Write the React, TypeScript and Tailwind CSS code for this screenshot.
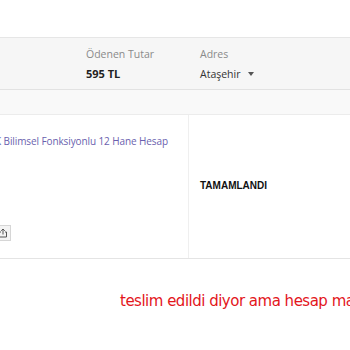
/* Order detail fragment: summary band, product row and a note */
export default function App() {
  return (
    <div className="w-[350px] h-[350px] overflow-hidden bg-white font-['Open_Sans',sans-serif]">
      {/* Top blank area */}
      <div className="h-[37px]" />

      {/* Summary band with amount and address */}
      <div className="border-t border-[#e6e6e6] bg-[#f6f6f6] h-[52px] flex pl-[86px] pt-[9px]">
        <div className="w-[114px]">
          <div className="text-[10.5px] leading-[14px] text-[#8a8a8a]">Ödenen Tutar</div>
          <div className="mt-[6px] text-[11px] leading-[14px] font-bold text-[#222]">595 TL</div>
        </div>
        <div>
          <div className="text-[10.5px] leading-[14px] text-[#8a8a8a]">Adres</div>
          <div className="mt-[6px] flex items-center text-[10.5px] leading-[14px] text-[#333]">
            Ataşehir
            <svg width="6" height="4" viewBox="0 0 6 4" className="ml-[7px]">
              <path d="M0 0h6L3 4z" fill="#555" />
            </svg>
          </div>
        </div>
      </div>

      {/* Empty secondary strip */}
      <div className="border-t border-[#e2e2e2] border-b border-b-[#ececec] bg-[#f9f9f9] h-[26px]" />

      {/* Product row */}
      <div className="flex h-[144px] border-b border-[#e4e4e4]">
        <div className="w-[189px] border-r border-[#efefef] relative">
          <div className="-ml-[5px] mt-[19px] text-[10px] leading-[14px] text-[#6a5fae] whitespace-nowrap tracking-[-0.1px]">
            K Bilimsel Fonksiyonlu 12 Hane Hesap
          </div>
          <div className="absolute left-[-6px] top-[110px] w-[17px] h-[16px] border border-[#d6d6d6] bg-[#f4f4f4] flex items-center justify-center">
            <svg width="10" height="10" viewBox="0 0 10 10" fill="none" stroke="#555" strokeWidth="1">
              <path d="M3 4H1.5v5h7V4H7" />
              <path d="M5 6.5V1M3.2 2.8L5 1l1.8 1.8" />
            </svg>
          </div>
        </div>
        <div className="flex-1 pl-[11px] pt-[65px]">
          <div className="font-['Liberation_Sans',Arial,sans-serif] text-[10px] leading-[12px] font-bold text-[#111]">
            TAMAMLANDI
          </div>
        </div>
      </div>

      {/* Customer note */}
      <div className="pl-[120px] pt-[32px] whitespace-nowrap font-['DejaVu_Sans',Verdana,sans-serif] text-[15px] leading-[20px] tracking-[-0.5px] text-[#e3161c]">
        teslim edildi diyor ama hesap makinesi gelmedi
      </div>
    </div>
  );
}
